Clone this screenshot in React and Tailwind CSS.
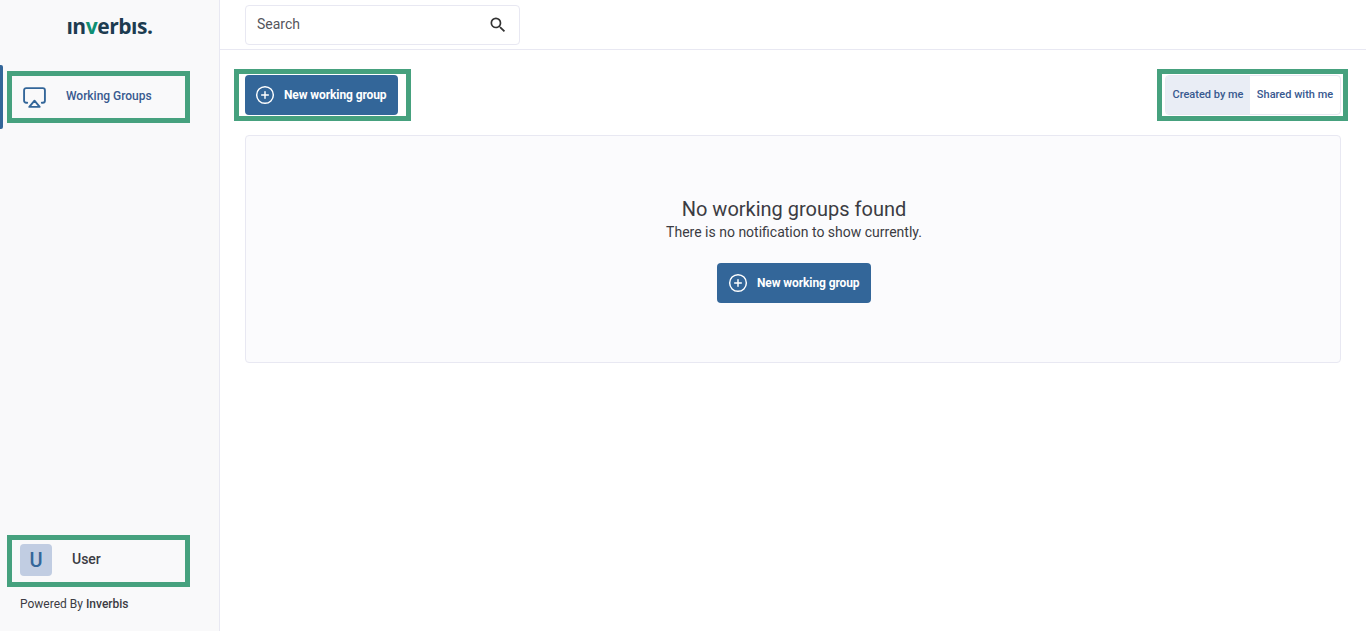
import React from "react";
import { Airplay, CirclePlus } from "lucide-react";
import { MdSearch } from "react-icons/md";

function NewButton({ className }) {
  return (
    <button className={`flex h-10 items-center gap-[9px] rounded-[4px] bg-[#336699] text-[12px] font-bold tracking-[-0.1px] text-white ${className}`}>
      <CirclePlus size={20} strokeWidth={1.75} />
      <span>New working group</span>
    </button>
  );
}

export default function App() {
  return (
    <div className="flex h-[631px] w-[1366px] overflow-hidden bg-white font-['Roboto',sans-serif] text-[#3c3c43]">
      <aside className="flex w-[220px] shrink-0 flex-col border-r border-[#e8e8f2] bg-[#f9f9fa]">
        <div className="flex h-[65px] items-start justify-center pt-[11px]">
          <div className="font-['Open_Sans',sans-serif] text-[21px] leading-[30px] font-bold tracking-[-0.45px] text-[#1d3c50]">
            <span>ın</span>
            <span className="text-[#0f8f73]">v</span>
            <span>erbıs.</span>
          </div>
        </div>
        <div className="flex h-16 items-center">
          <div className="h-16 w-[3px] rounded-r-[2px] bg-[#336699]" />
          <div className="ml-1 flex h-[52px] w-[183px] items-center border-[5px] border-[#46a17e] pl-[10px] text-[12px] font-medium tracking-[-0.02px] text-[#38598f]">
            <Airplay size={25} strokeWidth={1.8} className="text-[#336699]" />
            <span className="mb-[2px] ml-[19px]">Working Groups</span>
          </div>
        </div>
        <div className="mt-auto ml-[7px] flex h-[52px] w-[183px] items-center border-[5px] border-[#46a17e] pb-[2px] pl-2">
          <div className="flex size-8 items-center justify-center rounded-[4px] bg-[#c1cde2] text-[20px] font-medium text-[#336699]">U</div>
          <span className="mb-[2px] ml-5 text-[14px] font-medium">User</span>
        </div>
        <div className="mt-[8px] mb-[18px] ml-5 text-[12px] leading-[18px]">
          Powered By <span className="font-medium">Inverbis</span>
        </div>
      </aside>
      <main className="flex min-w-0 flex-1 flex-col">
        <header className="flex h-[50px] shrink-0 items-start border-b border-[#e8e8f2] pt-[5px] pl-[25px]">
          <div className="flex h-10 w-[275px] items-center justify-between rounded-[4px] border border-[#e8e8f2] px-[11px] text-[14px] text-[#55555c]">
            <span className="mb-[2px]">Search</span>
            <MdSearch size={20} className="text-[#333]" />
          </div>
        </header>
        <div className="flex flex-1 flex-col px-[25px]">
          <div className="mt-[19px] flex items-start justify-between">
            <div className="-ml-[11px] flex h-[52px] items-center border-[5px] border-[#46a17e] pr-2 pl-[6px]">
              <NewButton className="w-[153px] pl-[10px]" />
            </div>
            <div className="-mr-[7px] flex h-[52px] items-center border-[5px] border-[#46a17e] pr-[2px] pl-[3px]">
              <div className="flex h-10 w-[176px] overflow-hidden rounded-[4px] border border-[#e8e8f2] text-[11px] font-medium text-[#38598f]">
                <div className="flex w-[84px] items-center justify-center bg-[#e9edf5]">Created by me</div>
                <div className="flex flex-1 items-center justify-center">Shared with me</div>
              </div>
            </div>
          </div>
          <section className="mt-[14px] flex h-[228px] flex-col items-center rounded-[4px] border border-[#e8e8f2] bg-[#fbfbfd] pt-[60px] pl-[2px]">
            <h2 className="mb-[1px] text-[20px] leading-[26px] font-normal">No working groups found</h2>
            <p className="text-[14px] leading-[18px]">There is no notification to show currently.</p>
            <div className="mt-[22px]">
              <NewButton className="w-[154px] pl-[11px]" />
            </div>
          </section>
        </div>
      </main>
    </div>
  );
}
